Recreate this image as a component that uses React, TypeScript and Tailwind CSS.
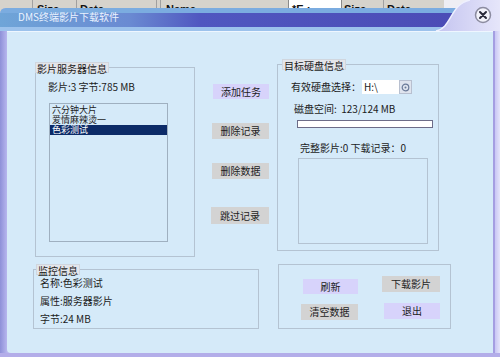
const font = { fontFamily: '"Noto Sans CJK SC", "Noto Sans", sans-serif' };

function Btn({ label, tone, className }: { label: string; tone: "lav" | "grey"; className: string }) {
  return (
    <div
      className={`flex items-center justify-center text-[10px] leading-none text-[#1c1c1c] ${
        tone === "lav" ? "bg-[#d7d3fb]" : "bg-[#d3d3d3]"
      } ${className}`}
    >
      {label}
    </div>
  );
}

function Legend({ label, className }: { label: string; className: string }) {
  return (
    <legend
      className={`h-[11px] px-[1px] text-[10px] leading-[11px] text-[#1c1c1c] bg-[#e3e5ea] border border-[#d0d6de] ${className}`}
    >
      {label}
    </legend>
  );
}

function TitleBar() {
  return (
    <div className="relative h-[23px] shrink-0">
      <svg className="absolute left-0 top-[-8px]" width="500" height="31" viewBox="0 0 500 31">
        <defs>
          <linearGradient id="band" x1="0" x2="1" y1="0" y2="0">
            <stop offset="0" stopColor="#6fa5d8" />
            <stop offset="0.26" stopColor="#6a8ad2" />
            <stop offset="0.4" stopColor="#5057c0" />
            <stop offset="1" stopColor="#4a4ab4" />
          </linearGradient>
          <linearGradient id="lav" x1="0" x2="1" y1="0" y2="0">
            <stop offset="0" stopColor="#c4c4f0" />
            <stop offset="1" stopColor="#e6e6fa" />
          </linearGradient>
        </defs>
        <path d="M0 14 Q0 8 6 8 L500 8 L500 31 L0 31 Z" fill="#7bace0" />
        <rect x="0" y="13" width="500" height="14" fill="url(#band)" />
        <rect x="0" y="27" width="500" height="4" fill="#9cc2ec" />
        <path d="M436 31 C452 28 450 4 470 0 L500 0 L500 31 Z" fill="url(#lav)" />
        <path d="M436 31 C452 28 450 4 470 0" fill="none" stroke="#eef0ff" strokeWidth="1.5" />
        <circle cx="483" cy="15" r="7.5" fill="#f2f2fa" stroke="#8c8ca0" strokeWidth="1.5" />
        <path d="M480 12 L486 18 M486 12 L480 18" stroke="#2a2a3a" strokeWidth="2" strokeLinecap="round" />
      </svg>
      <div className="relative pl-[18px] pt-[3px] text-[10px] leading-[11px] text-[#eaf2ff]" style={font}>
        DMS终端影片下载软件
      </div>
    </div>
  );
}

function HeaderStrip() {
  return (
    <div
      className="h-[8px] shrink-0 overflow-hidden bg-[#d6d3cc] flex text-[11px] leading-[11px] font-bold text-[#111]"
      style={{ fontFamily: '"Liberation Sans", Arial, sans-serif' }}
    >
      <div className="w-[33px] border-r border-[#a0a0a0]" />
      <div className="w-[44px] pl-[4px] pt-[4px] border-r border-[#a0a0a0]">Size</div>
      <div className="w-[80px] pl-[3px] pt-[4px] border-r border-[#a0a0a0]">Date</div>
      <div className="w-[4px] border-r border-[#a0a0a0]" />
      <div className="w-[127px] pl-[5px] pt-[4px]">Name</div>
      <div className="w-[54px] bg-white border-x border-[#8a8a8a] pl-[3px] pt-[4px]">*E.:</div>
      <div className="w-[42px] pl-[2px] pt-[4px] border-r border-[#a0a0a0]">Size</div>
      <div className="w-[60px] pl-[3px] pt-[4px]">Date</div>
      <div className="flex-1 bg-[#eeeef4]" />
    </div>
  );
}

export default function App() {
  return (
    <div className="w-[500px] h-[357px] overflow-hidden flex flex-col bg-[#d6d3cc]" style={font}>
      <HeaderStrip />
      <div className="flex-1 flex flex-col rounded-tl-[6px] bg-[#b9b8ee]">
        <TitleBar />
        <div className="flex h-[322px]">
          <div className="w-[7px] bg-gradient-to-r from-[#8e90d8] to-[#b7b6ee]" />
          <div className="w-[486px] bg-[#d5eaf9] border-t border-[#eef6ff] rounded-bl-[4px] flex flex-col text-[#1c1c1c]">
            {/* top row */}
            <div className="h-[224px] flex items-start pl-[28px]">
              <fieldset className="mt-[30px] w-[160px] h-[195px] border border-[#b4c3d2] px-0">
                <Legend label="影片服务器信息" className="ml-[-1px]" />
                <div className="mt-[9px] pl-[12px] text-[10px] leading-[10px]">影片:3 字节:785 MB</div>
                <div className="mt-[11px] ml-[13px] w-[119px] h-[139px] border border-[#9fb0c0] pt-[1px] text-[9px] leading-[10px]">
                  <div className="pl-[2px] h-[10px]">六分钟大片</div>
                  <div className="pl-[2px] h-[10px]">爱情麻辣烫一</div>
                  <div className="pl-[2px] h-[10px] bg-[#0c2b68] text-white">色彩测试</div>
                </div>
              </fieldset>

              <div className="mt-[52px] ml-[16px] w-[58px] flex flex-col items-end">
                <Btn label="添加任务" tone="lav" className="w-[56px] h-[15px]" />
                <Btn label="删除记录" tone="grey" className="mt-[24px] w-[57px] h-[16px]" />
                <Btn label="删除数据" tone="grey" className="mt-[24px] w-[57px] h-[16px]" />
                <Btn label="跳过记录" tone="grey" className="mt-[28px] w-[58px] h-[17px]" />
              </div>

              <fieldset className="mt-[27px] ml-[8px] w-[162px] h-[192px] border border-[#b4c3d2] px-0">
                <Legend label="目标硬盘信息" className="ml-[4px]" />
                <div className="mt-[10px] flex items-center text-[10px] leading-[10px]">
                  <span className="ml-[13px] w-[71px]">有效硬盘选择：</span>
                  <div className="w-[37px] h-[14px] bg-white flex items-center pl-[2px] text-[10px]">H:\</div>
                  <div className="w-[13px] h-[14px] bg-[#dfe4ee] border border-[#b8c0d0] flex items-center justify-center">
                    <svg width="9" height="9" viewBox="0 0 9 9">
                      <circle cx="4.5" cy="4.5" r="3.3" fill="none" stroke="#6a7a98" strokeWidth="1.2" />
                      <circle cx="4.5" cy="4.5" r="1" fill="#6a7a98" />
                    </svg>
                  </div>
                </div>
                <div className="mt-[10px] pl-[16px] text-[10px] leading-[10px]">磁盘空间:&nbsp; 123/124 MB</div>
                <div className="mt-[6px] ml-[19px] w-[136px] h-[8px] bg-white border border-[#6c6c88]" />
                <div className="mt-[15px] pl-[22px] text-[10px] leading-[10px]">完整影片:0 下载记录：0</div>
                <div className="mt-[5px] ml-[20px] w-[130px] h-[86px] border border-[#b4c3d2]" />
              </fieldset>
            </div>

            {/* bottom row */}
            <div className="mt-[8px] flex items-start pl-[26px]">
              <fieldset className="w-[226px] h-[65px] border border-[#b4c3d2] px-0">
                <Legend label="监控信息" className="ml-[2px]" />
                <div className="pl-[6px] text-[10px] leading-[10px]">
                  <div className="mt-[3px]">名称:色彩测试</div>
                  <div className="mt-[8px]">属性:服务器影片</div>
                  <div className="mt-[8px]">字节:24 MB</div>
                </div>
              </fieldset>
              <div className="ml-[19px] w-[173px] h-[65px] border border-[#b4c3d2] flex">
                <div className="w-[79px] flex flex-col items-end">
                  <Btn label="刷新" tone="lav" className="mt-[14px] w-[55px] h-[15px]" />
                  <Btn label="清空数据" tone="grey" className="mt-[10px] w-[57px] h-[16px]" />
                </div>
                <div className="w-[82px] flex flex-col items-end">
                  <Btn label="下载影片" tone="grey" className="mt-[11px] w-[58px] h-[16px]" />
                  <Btn label="退出" tone="lav" className="mt-[11px] w-[56px] h-[16px]" />
                </div>
              </div>
            </div>
          </div>
          <div className="w-[7px] flex">
            <div className="w-[2px] bg-[#a49ee2]" />
            <div className="flex-1 bg-gradient-to-r from-[#c8c6f4] to-[#e4e4fa]" />
          </div>
        </div>
        <div className="flex-1 bg-[#b3ade9]" />
      </div>
    </div>
  );
}
